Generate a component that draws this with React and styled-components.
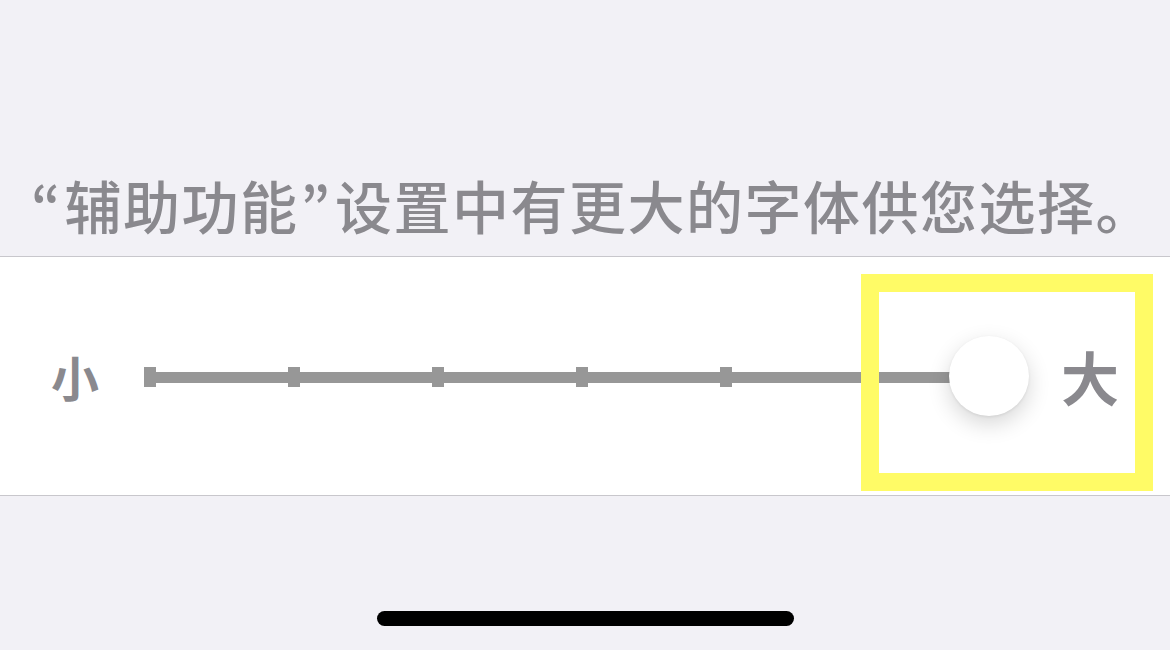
import React from "react";
import styled, { createGlobalStyle } from "styled-components";

const GlobalStyle = createGlobalStyle`
  html, body {
    margin: 0;
    padding: 0;
    background: #f2f1f6;
  }
  body {
    font-family: "Noto Sans CJK SC", "Noto Sans", sans-serif;
  }
`;

const Screen = styled.div`
  width: 1170px;
  height: 650px;
  background: #f2f1f6;
  display: flex;
  flex-direction: column;
  overflow: hidden;
`;

const Header = styled.div`
  height: 256px;
  box-sizing: border-box;
  display: flex;
  align-items: flex-end;
  padding: 0 0 18px 31px;
`;

const HeaderText = styled.div`
  font-size: 57px;
  line-height: 68px;
  letter-spacing: 1.5px;
  font-weight: 500;
  color: #8a898e;
  white-space: nowrap;
`;

// proportional curly quotes, as in the original
const Quote = styled.span`
  font-family: "Noto Sans CJK JP", "Noto Sans", sans-serif;
  letter-spacing: ${p => p.$after}px;
  margin-left: ${p => p.$before}px;
`;

const Row = styled.div`
  position: relative;
  height: 238px;
  background: #ffffff;
  border-top: 1px solid #c8c7cc;
  border-bottom: 1px solid #c8c7cc;
  display: flex;
  align-items: center;
  padding: 0 50px 0 51px;
`;

const SizeLabel = styled.div`
  font-size: ${p => p.$size}px;
  font-weight: 700;
  color: #8a898e;
  line-height: 1;
  width: ${p => p.$width}px;
  margin-left: ${p => p.$offset || 0}px;
`;

const Track = styled.div`
  position: relative;
  width: 885px;
  height: 80px;
`;

const Line = styled.div`
  position: absolute;
  left: 0;
  top: 36px;
  width: 845px;
  height: 11px;
  background: #979797;
`;

const Tick = styled.div`
  position: absolute;
  top: 31px;
  width: 12px;
  height: 20px;
  background: #979797;
`;

const Thumb = styled.div`
  position: absolute;
  right: 0;
  top: 0;
  width: 80px;
  height: 80px;
  border-radius: 50%;
  background: #ffffff;
  box-shadow: 0 8px 22px rgba(0, 0, 0, 0.16), 0 1px 3px rgba(0, 0, 0, 0.08);
`;

const Highlight = styled.div`
  position: absolute;
  left: 861px;
  top: 17px;
  width: 292px;
  height: 217px;
  box-sizing: border-box;
  border: 18px solid #fffb66;
  pointer-events: none;
`;

const Footer = styled.div`
  flex: 1;
  display: flex;
  justify-content: center;
  align-items: flex-end;
  padding-bottom: 24px;
`;

const HomeIndicator = styled.div`
  width: 417px;
  height: 15px;
  border-radius: 8px;
  background: #000000;
`;

const ticks = [0, 1, 2, 3, 4, 5];

export default function App() {
  return (
    <Screen>
      <GlobalStyle />
      <Header>
        <HeaderText>
          <Quote $before={0} $after={4}>“</Quote>辅助功能<Quote $before={2} $after={5}>”</Quote>设置中有更大的字体供您选择。
        </HeaderText>
      </Header>
      <Row>
        <SizeLabel $size={48} $width={93}>小</SizeLabel>
        <Track>
          <Line />
          {ticks.map(i => (
            <Tick key={i} style={{ left: i * 144 }} />
          ))}
          <Thumb />
        </Track>
        <SizeLabel $size={58} $offset={32}>大</SizeLabel>
        <Highlight />
      </Row>
      <Footer>
        <HomeIndicator />
      </Footer>
    </Screen>
  );
}
